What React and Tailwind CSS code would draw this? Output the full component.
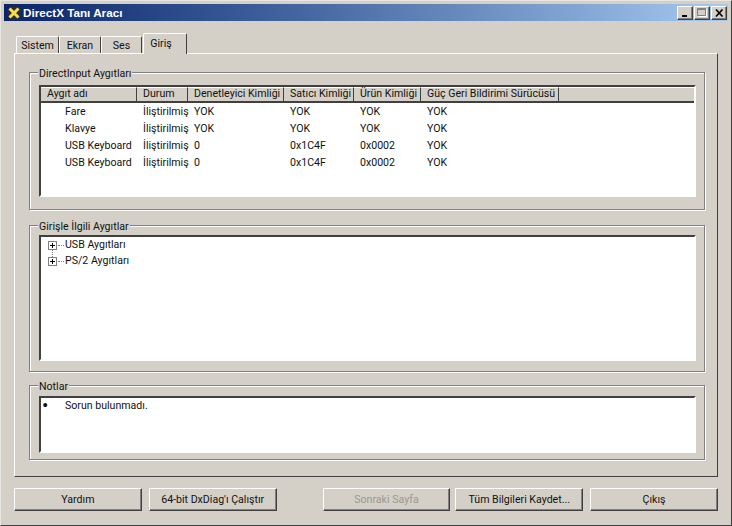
import React from "react";

const raised =
  "border border-t-white border-l-white border-r-[#404040] border-b-[#404040] shadow-[inset_-1px_-1px_0_#808080]";

const kolumner = [
  { ad: "Aygıt adı", w: "w-[96px]" },
  { ad: "Durum", w: "w-[51px]" },
  { ad: "Denetleyici Kimliği", w: "w-[96px]" },
  { ad: "Satıcı Kimliği", w: "w-[70px]" },
  { ad: "Ürün Kimliği", w: "w-[67px]" },
  { ad: "Güç Geri Bildirimi Sürücüsü", w: "w-[138px]" },
];

const satirlar = [
  ["Fare", "İliştirilmiş", "YOK", "YOK", "YOK", "YOK"],
  ["Klavye", "İliştirilmiş", "YOK", "YOK", "YOK", "YOK"],
  ["USB Keyboard", "İliştirilmiş", "0", "0x1C4F", "0x0002", "YOK"],
  ["USB Keyboard", "İliştirilmiş", "0", "0x1C4F", "0x0002", "YOK"],
];

const Grup = ({ baslik, className, children }) => (
  <div
    className={`relative mr-[12px] ml-[14px] border border-[#808080] shadow-[inset_1px_1px_0_#fff,1px_1px_0_#fff] ${className}`}
  >
    <div className="absolute -top-[6px] left-[8px] bg-[#d4d0c8] px-px leading-[13px]">
      {baslik}
    </div>
    {children}
  </div>
);

const Liste = ({ className, children }) => (
  <div
    className={`mr-[8px] ml-[9px] border-2 border-t-[#404040] border-l-[#404040] border-r-white border-b-white bg-white ${className}`}
  >
    {children}
  </div>
);

const Arti = () => (
  <svg width="9" height="9" viewBox="0 0 9 9" className="shrink-0">
    <rect x="0.5" y="0.5" width="8" height="8" fill="#fff" stroke="#808080" />
    <path d="M2 4.5h5M4.5 2v5" stroke="#000" />
  </svg>
);

const Dugme = ({ children, className = "", pasif }) => (
  <div
    className={`flex h-[23px] w-[128px] items-center justify-center pt-px ${raised} ${
      pasif ? "text-[#9a9892]" : ""
    } ${className}`}
  >
    {children}
  </div>
);

const Sekme = ({ children, className }) => (
  <div
    className={`flex h-[17px] items-center justify-center rounded-t-[2px] border-t border-l border-r border-t-white border-l-white border-r-[#404040] pt-px ${className}`}
  >
    {children}
  </div>
);

const PencereDugme = ({ children }) => (
  <div className={`flex h-[14px] w-[16px] items-center justify-center bg-[#d4d0c8] ${raised}`}>
    {children}
  </div>
);

export default function App() {
  return (
    <div
      className="flex h-[526px] w-[732px] flex-col overflow-hidden border border-t-[#e8e6e0] border-l-[#e8e6e0] border-r-[#404040] border-b-[#404040] bg-[#d4d0c8] text-[10.6px] text-[#111]"
      style={{ fontFamily: 'Roboto, "Liberation Sans", sans-serif' }}
    >
      {/* baslik cubugu */}
      <div className="mx-[3px] mt-[3px] flex h-[17px] items-center bg-gradient-to-r from-[#0a246a] to-[#a6caf0] pr-[1px] pl-[2px]">
        <svg width="16" height="16" viewBox="0 0 16 16" className="mr-[1px] shrink-0">
          <circle cx="8" cy="8" r="7" fill="#2a2a3a" />
          <path d="M3.5 3.5L12.5 12.5M12.5 3.5L3.5 12.5" stroke="#f4e04a" strokeWidth="3" />
        </svg>
        <span
          className="text-[11.7px] font-bold text-white"
          style={{ fontFamily: '"Liberation Sans", sans-serif' }}
        >
          DirectX Tanı Aracı
        </span>
        <div className="ml-auto flex">
          <PencereDugme>
            <svg width="8" height="8" viewBox="0 0 8 8">
              <path d="M1 7h5" stroke="#000" strokeWidth="2" />
            </svg>
          </PencereDugme>
          <div className="ml-px">
            <PencereDugme>
              <svg width="10" height="9" viewBox="0 0 10 9">
                <path d="M.5.5h8v7h-8z" fill="none" stroke="#808080" />
                <path d="M.5 1.5h8" stroke="#808080" />
                <path d="M1.5 8.5h8v-7" fill="none" stroke="#fff" />
              </svg>
            </PencereDugme>
          </div>
          <div className="ml-px">
            <PencereDugme>
              <svg width="9" height="8" viewBox="0 0 9 8">
                <path d="M1 .5l6.5 7M7.5.5L1 7.5" stroke="#000" strokeWidth="1.6" />
              </svg>
            </PencereDugme>
          </div>
        </div>
      </div>

      {/* sekmeler */}
      <div className="mt-[11px] ml-[15px] flex h-[21px] items-end">
        <Sekme className="w-[43px]">Sistem</Sekme>
        <Sekme className="w-[42px]">Ekran</Sekme>
        <Sekme className="w-[41px]">Ses</Sekme>
        <div className="relative z-10 -mb-px ml-px flex h-[21px] w-[44px] items-start justify-center rounded-t-[2px] border-t border-l border-r border-t-white border-l-white border-r-[#404040] bg-[#d4d0c8] pt-[2px] pr-[8px]">
          Giriş
        </div>
      </div>

      {/* panel */}
      <div className="mx-[13px] flex h-[424px] flex-col border border-t-white border-l-white border-r-[#404040] border-b-[#404040] pt-[18px]">
        <Grup baslik="DirectInput Aygıtları" className="h-[138px] pt-[12px]">
          <Liste className="h-[112px]">
            <div className="flex h-[14px] bg-[#d4d0c8]">
              {kolumner.map((k) => (
                <div
                  key={k.ad}
                  className={`${k.w} h-[14px] border-t border-r border-t-white border-r-[#404040] pl-[6px] leading-[12px] whitespace-nowrap`}
                >
                  {k.ad}
                </div>
              ))}
              <div className="flex-1 border-t border-t-white" />
            </div>
            <div className="border-t-2 border-[#404040]">
              {satirlar.map((s, i) => (
                <div key={i} className="flex h-[17px] items-center leading-[17px] whitespace-nowrap">
                  <div className="w-[96px] pl-[24px]">{s[0]}</div>
                  <div className="w-[51px] pl-[6px]">{s[1]}</div>
                  <div className="w-[96px] pl-[6px]">{s[2]}</div>
                  <div className="w-[70px] pl-[6px]">{s[3]}</div>
                  <div className="w-[67px] pl-[6px]">{s[4]}</div>
                  <div className="w-[138px] pl-[6px]">{s[5]}</div>
                </div>
              ))}
            </div>
          </Liste>
        </Grup>

        <Grup baslik="Girişle İlgili Aygıtlar" className="mt-[15px] h-[147px] pt-[9px]">
          <Liste className="h-[126px] pl-[7px]">
            <div className="flex h-[16px] items-center leading-[16px]">
              <Arti />
              <span className="mr-[1px] ml-[1px] w-[6px] border-t border-dotted border-[#808080]" />
              <span>USB Aygıtları</span>
            </div>
            <div className="relative flex h-[16px] items-center leading-[16px]">
              <span className="absolute -top-[4px] left-[4px] h-[8px] border-l border-dotted border-[#808080]" />
              <Arti />
              <span className="mr-[1px] ml-[1px] w-[6px] border-t border-dotted border-[#808080]" />
              <span>PS/2 Aygıtları</span>
            </div>
          </Liste>
        </Grup>

        <Grup baslik="Notlar" className="mt-[13px] h-[75px] pt-[10px]">
          <Liste className="h-[57px]">
            <div className="flex h-[16px] items-center leading-[16px]">
              <span className="w-[24px] pl-[1px] text-[19px]">•</span>
              <span>Sorun bulunmadı.</span>
            </div>
          </Liste>
        </Grup>
      </div>

      {/* alt dugmeler */}
      <div className="mx-[13px] mt-[11px] flex">
        <Dugme>Yardım</Dugme>
        <Dugme className="ml-[7px]">64-bit DxDiag'ı Çalıştır</Dugme>
        <Dugme pasif className="ml-[46px]">Sonraki Sayfa</Dugme>
        <Dugme className="ml-[5px] w-[127px]">Tüm Bilgileri Kaydet...</Dugme>
        <Dugme className="ml-[7px]">Çıkış</Dugme>
      </div>
    </div>
  );
}
